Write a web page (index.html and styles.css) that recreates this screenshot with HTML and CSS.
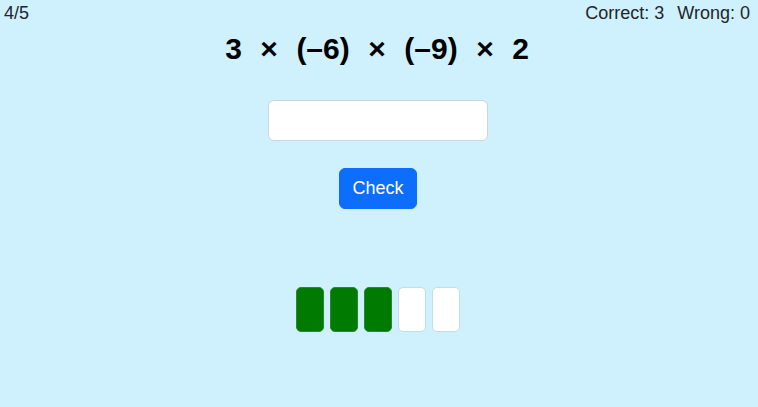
FILE: index.html
```html
<!DOCTYPE html>
<html lang="en">
<head>
<meta charset="utf-8">
<title>Multiplication practice</title>
<link rel="stylesheet" href="styles.css">
</head>
<body>
<div class="page">
  <header class="topbar">
    <div class="progress">4/5</div>
    <div class="score">
      <span>Correct: 3</span>
      <span>Wrong: 0</span>
    </div>
  </header>
  <div class="equation">
    <span>3</span><span>×</span><span>(–6)</span><span>×</span><span>(–9)</span><span>×</span><span>2</span>
  </div>
  <input class="answer" type="text" aria-label="Answer">
  <button class="check" type="button">Check</button>
  <div class="boxes">
    <div class="box done"></div>
    <div class="box done"></div>
    <div class="box done"></div>
    <div class="box"></div>
    <div class="box"></div>
  </div>
</div>
</body>
</html>
```
FILE: styles.css
```css
html, body {
  margin: 0;
  padding: 0;
}
body {
  background: #cff1fe;
  color: #212529;
  font-family: "Liberation Sans", Arial, sans-serif;
  font-size: 18px;
  line-height: 1.5;
  width: 758px;
  height: 407px;
  overflow: hidden;
}
.page {
  display: flex;
  flex-direction: column;
  align-items: center;
  padding-right: 2px;
}
.topbar {
  align-self: stretch;
  display: flex;
  justify-content: space-between;
  padding: 0 6px 0 4px;
  height: 27px;
}
.score {
  display: flex;
  gap: 13px;
}
.equation {
  margin-top: 4px;
  display: flex;
  gap: 18.5px;
  font-size: 30px;
  font-weight: bold;
  line-height: 36px;
  color: #000;
  margin-right: 2px;
}
.answer {
  margin-top: 33px;
  width: 220px;
  height: 41px;
  box-sizing: border-box;
  border: 1px solid #ced4da;
  border-radius: 6px;
  background: #fff;
  font: inherit;
  padding: 6px 12px;
}
.check {
  margin-top: 27px;
  font: inherit;
  line-height: 27px;
  padding: 6px 12.5px;
  border: 1px solid #0d6efd;
  border-radius: 6px;
  background: #0d6efd;
  color: #fff;
  height: 41px;
  box-sizing: border-box;
}
.boxes {
  margin-top: 78px;
  display: flex;
  gap: 6px;
}
.box {
  width: 28px;
  height: 45px;
  box-sizing: border-box;
  border-radius: 5px;
  background: #fff;
  border: 1px solid #bfdfec;
}
.box.done {
  background: #007a00;
  border-color: #2a8a2a;
}
```
